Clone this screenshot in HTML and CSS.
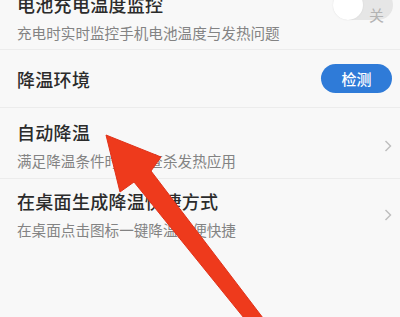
FILE: index.html
```html
<!DOCTYPE html>
<html lang="zh">
<head>
<meta charset="utf-8">
<title>降温设置</title>
<link rel="stylesheet" href="styles.css">
</head>
<body>
<div class="page">
  <div class="row row-first">
    <div class="text">
      <div class="title">电池充电温度监控</div>
      <div class="sub">充电时实时监控手机电池温度与发热问题</div>
    </div>
    <div class="toggle"><span class="knob"></span><span class="off">关</span></div>
  </div>
  <div class="row row-single">
    <div class="text">
      <div class="title">降温环境</div>
    </div>
    <button class="btn">检测</button>
  </div>
  <div class="row">
    <div class="text">
      <div class="title">自动降温</div>
      <div class="sub">满足降温条件时自动查杀发热应用</div>
    </div>
    <svg class="chev" viewBox="0 0 8 12" width="8" height="12"><path d="M1.5 1 L6.5 6 L1.5 11" fill="none" stroke="#bdbdbd" stroke-width="1.4"/></svg>
  </div>
  <div class="row row-last">
    <div class="text">
      <div class="title">在桌面生成降温快捷方式</div>
      <div class="sub">在桌面点击图标一键降温方便快捷</div>
    </div>
    <svg class="chev" viewBox="0 0 8 12" width="8" height="12"><path d="M1.5 1 L6.5 6 L1.5 11" fill="none" stroke="#bdbdbd" stroke-width="1.4"/></svg>
  </div>
  <svg class="arrow" viewBox="0 0 400 317" width="400" height="317">
    <polygon points="106,135 161,157 151,171 263,318 244,318 134,182 120,192" fill="#ee3a1c" stroke="#e0321a" stroke-width="1" stroke-linejoin="round"/>
  </svg>
</div>
</body>
</html>
```

FILE: styles.css
```css
html, body {
  margin: 0;
  padding: 0;
}
body {
  background: #f8f8f8;
  font-family: "Noto Sans CJK SC", "Noto Sans", sans-serif;
  width: 400px;
  height: 317px;
  overflow: hidden;
}
.page {
  position: relative;
  width: 400px;
  height: 317px;
  overflow: hidden;
}
.row {
  display: flex;
  align-items: center;
  justify-content: space-between;
  padding: 12px 8px 7px 17px;
  border-bottom: 1px solid #ececec;
}
.row-first {
  margin-top: -20px;
  padding-bottom: 6px;
}
.row-single {
  height: 57px;
  padding-top: 0;
  padding-bottom: 0;
}
.row-last {
  border-bottom: none;
  padding-top: 10px;
}
.text {
  display: flex;
  flex-direction: column;
  gap: 7px;
}
.title {
  font-size: 18px;
  line-height: 24px;
  font-weight: 500;
  color: #2b2b2b;
  letter-spacing: 0.3px;
}
.sub {
  font-size: 14.6px;
  line-height: 20px;
  color: #838383;
}
.toggle {
  display: flex;
  align-items: center;
  width: 60px;
  height: 30px;
  border-radius: 15px;
  background: #e6e6e6;
  margin-top: -25px;
  margin-right: -1px;
}
.knob {
  width: 30px;
  height: 30px;
  border-radius: 50%;
  background: #ffffff;
  box-shadow: 0 0 2px rgba(0,0,0,0.08);
}
.off {
  font-size: 15px;
  line-height: 15px;
  color: #b3b3b3;
  margin-left: 6px;
  margin-top: 18px;
}
.btn {
  width: 71px;
  height: 29px;
  border: none;
  border-radius: 15px;
  background: #2f7bd8;
  color: #ffffff;
  font-family: "Noto Sans CJK SC", sans-serif;
  font-size: 15px;
  font-weight: 500;
  line-height: 29px;
  padding: 0;
}
.chev {
  flex: none;
}
.arrow {
  position: absolute;
  left: 0;
  top: 0;
  pointer-events: none;
}
```
